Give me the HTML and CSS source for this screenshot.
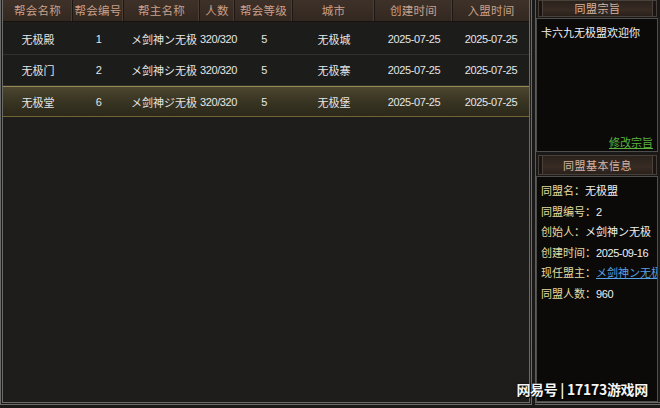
FILE: index.html
```html
<!DOCTYPE html>
<html lang="zh-CN">
<head>
<meta charset="utf-8">
<title>同盟信息</title>
<link rel="stylesheet" href="styles.css">
</head>
<body>
<div class="screen">
  <section class="guilds">
    <div class="thead">
      <div class="c c1">帮会名称</div>
      <div class="c c2">帮会编号</div>
      <div class="c c3">帮主名称</div>
      <div class="c c4">人数</div>
      <div class="c c5">帮会等级</div>
      <div class="c c6">城市</div>
      <div class="c c7">创建时间</div>
      <div class="c c8">入盟时间</div>
    </div>
    <div class="rows">
      <div class="row">
        <div class="c c1">无极殿</div>
        <div class="c c2 num">1</div>
        <div class="c c3">メ剑神ン无极</div>
        <div class="c c4 num">320/320</div>
        <div class="c c5 num">5</div>
        <div class="c c6">无极城</div>
        <div class="c c7 num">2025-07-25</div>
        <div class="c c8 num">2025-07-25</div>
      </div>
      <div class="row">
        <div class="c c1">无极门</div>
        <div class="c c2 num">2</div>
        <div class="c c3">メ剑神シ无极</div>
        <div class="c c4 num">320/320</div>
        <div class="c c5 num">5</div>
        <div class="c c6">无极寨</div>
        <div class="c c7 num">2025-07-25</div>
        <div class="c c8 num">2025-07-25</div>
      </div>
      <div class="row sel">
        <div class="c c1">无极堂</div>
        <div class="c c2 num">6</div>
        <div class="c c3">メ剑神ジ无极</div>
        <div class="c c4 num">320/320</div>
        <div class="c c5 num">5</div>
        <div class="c c6">无极堡</div>
        <div class="c c7 num">2025-07-25</div>
        <div class="c c8 num">2025-07-25</div>
      </div>
    </div>
  </section>
  <aside class="side">
    <div class="title">同盟宗旨</div>
    <div class="box motto">
      <p class="motto-text">卡六九无极盟欢迎你</p>
      <a class="edit">修改宗旨</a>
    </div>
    <div class="title title2">同盟基本信息</div>
    <div class="box info">
      <div class="line"><span class="k">同盟名：</span><span class="v">无极盟</span></div>
      <div class="line"><span class="k">同盟编号：</span><span class="v n">2</span></div>
      <div class="line"><span class="k">创始人：</span><span class="v">メ剑神ン无极</span></div>
      <div class="line"><span class="k">创建时间：</span><span class="v n">2025-09-16</span></div>
      <div class="line"><span class="k">现任盟主：</span><a class="link">メ剑神ン无极</a></div>
      <div class="line"><span class="k">同盟人数：</span><span class="v n">960</span></div>
    </div>
  </aside>
  <div class="mark">网易号 | 17173游戏网</div>
</div>
</body>
</html>
```

FILE: styles.css
```css
* { box-sizing: border-box; }
html, body {
  margin: 0;
  padding: 0;
  background: #1b1a18;
}
.screen {
  position: relative;
  width: 660px;
  height: 408px;
  overflow: hidden;
  display: flex;
  align-items: flex-start;
  font-family: "Noto Sans CJK SC", "Liberation Sans", sans-serif;
  font-size: 11px;
  color: #e6e6e6;
  background: #1a1917;
}
.guilds {
  width: 532px;
  height: 405px;
  border: 3px double #6a6a68;
  border-top: none;
  background:
    repeating-linear-gradient(45deg, rgba(255,255,255,0.008) 0 1px, rgba(0,0,0,0.015) 1px 3px),
    #1d1c1b;
  flex: none;
}
.thead {
  display: flex;
  height: 22px;
  background: linear-gradient(#3e3129, #33281f);
  border-bottom: 1px solid #151210;
  color: #c9a08a;
  font-size: 11.5px;
}
.thead .c {
  border-right: 1px solid #1d1814;
  box-shadow: inset -1px 0 0 #4d3e33;
  line-height: 21px;
  letter-spacing: 0.3px;
}
.thead .c8 { border-right: none; box-shadow: none; }
.c {
  flex: none;
  text-align: center;
  white-space: nowrap;
}
.c1 { width: 70px; }
.c2 { width: 51px; }
.c3 { width: 76px; }
.c4 { width: 35px; }
.c5 { width: 58px; }
.c6 { width: 82px; }
.c7 { width: 78px; }
.c8 { width: 76px; }
.rows {
  margin-top: 2px;
}
.row {
  display: flex;
  height: 31px;
  align-items: center;
  background: #1c1c1b;
  border-bottom: 1px solid #2f2f2d;
}
.row .c { line-height: 31px; padding-top: 1px; }
.row .c3 { text-align: right; padding-right: 3px; }
.num {
  font-family: "Liberation Sans", sans-serif;
  font-size: 11px;
  letter-spacing: -0.4px;
  color: #e6e6e6;
}
.row.sel {
  background: linear-gradient(#4c462f, #3a3623 45%, #2b281b);
  border-top: 1px solid #978852;
  border-bottom: 1px solid #6f6434;
  height: 31px;
}
.side {
  flex: none;
  width: 125px;
  height: 405px;
  margin-left: 3px;
  border-left: 1px solid #5c5c5a;
  border-bottom: 3px double #6a6a68;
  display: flex;
  flex-direction: column;
  background: #1a1917;
}
.title {
  height: 17px;
  margin: 0 3px 0 2px;
  background: linear-gradient(#2a221c, #382c24 60%, #2a211b);
  border: 1px solid #49403a;
  box-shadow: inset 3px 0 0 #1a1512, inset -3px 0 0 #1a1512, inset 4px 0 0 #4a413a, inset -4px 0 0 #4a413a;
  color: #d6b4a2;
  text-align: center;
  line-height: 15px;
  letter-spacing: 0.5px;
}
.title2 {
  height: 20px;
  line-height: 18px;
  margin-top: 3px;
}
.box {
  background: #0b0a09;
  border: 1px solid #4e4e4c;
  margin: 1px 2px 0 0;
  overflow: hidden;
}
.motto {
  height: 134px;
  display: flex;
  flex-direction: column;
  justify-content: space-between;
  padding: 5px 4px 2px 4px;
}
.motto-text {
  margin: 0;
  color: #f0f0f0;
  white-space: nowrap;
}
.edit {
  align-self: flex-end;
  color: #5cb33e;
  text-decoration: underline;
  line-height: 14px;
}
.info {
  flex: 1;
  padding: 3px 0 0 4px;
}
.line {
  height: 20.6px;
  line-height: 20px;
  white-space: nowrap;
}
.k { color: #e3dba0; }
.v { color: #f0f0f0; }
.v.n {
  font-family: "Liberation Sans", sans-serif;
  font-size: 11px;
  letter-spacing: -0.4px;
}
.link {
  color: #5aa2e0;
  text-decoration: underline;
}
.mark {
  position: absolute;
  right: 12px;
  bottom: 9px;
  font-family: "Noto Sans CJK SC", sans-serif;
  font-weight: 700;
  font-size: 14px;
  color: #f4f4f4;
  text-shadow: 0 0 2px #000, 1px 1px 1px #000;
  letter-spacing: -0.3px;
}
```
